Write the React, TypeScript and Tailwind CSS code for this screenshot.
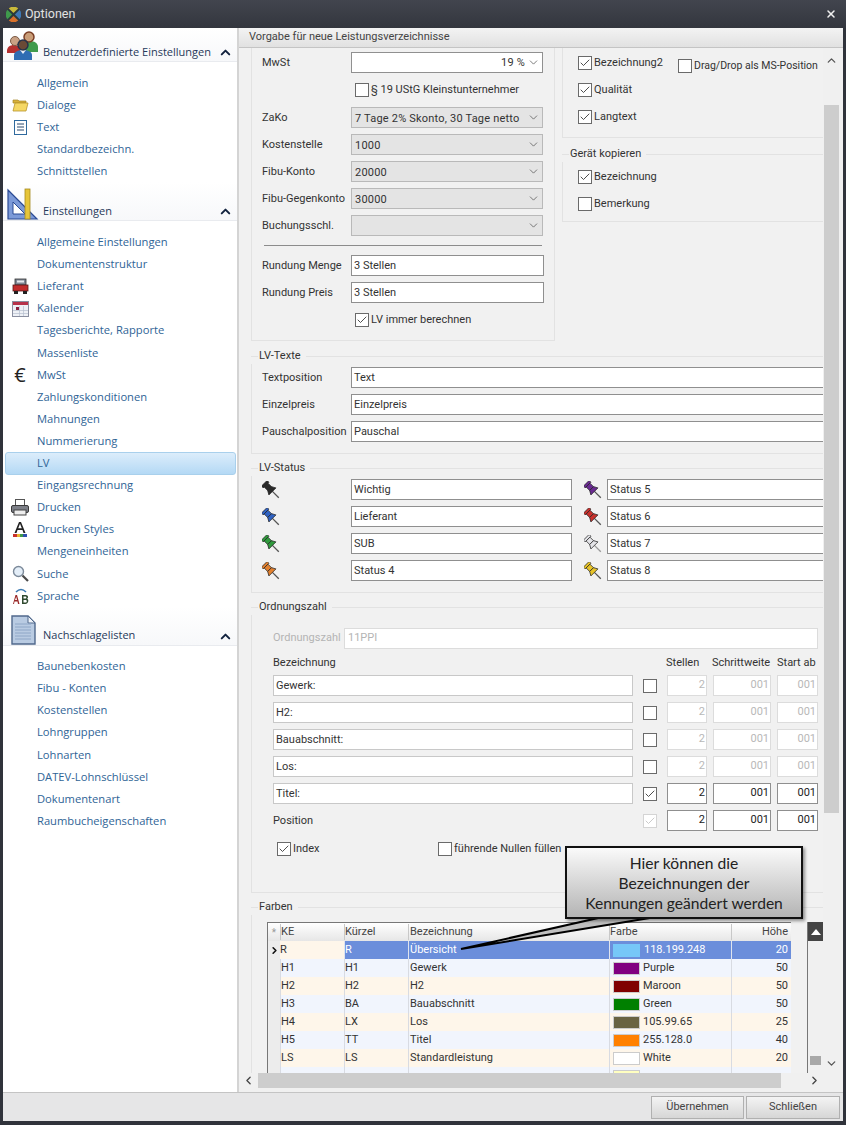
import type { ReactNode } from "react";
import { Check, ChevronDown, ChevronLeft, ChevronRight, ChevronUp, X } from "lucide-react";

const Logo = () => (
  <svg width="15" height="15" viewBox="0 0 16 16">
    <circle cx="8" cy="8" r="8" fill="#2c3a3c" />
    <path d="M3 1.5 A8 8 0 0 1 13 1.5 L8 6.5Z" fill="#c9b93a" />
    <path d="M1.5 3 L6.5 8 L1.5 13 A8 8 0 0 1 1.5 3Z" fill="#3f9a4c" />
    <path d="M3 14.5 L8 9.5 L13 14.5 A8 8 0 0 1 3 14.5Z" fill="#d8702a" />
    <path d="M14.5 3 A8 8 0 0 1 14.5 13 L9.5 8Z" fill="#3f78b4" />
  </svg>
);

const PeopleIcon = () => (
  <svg width="34" height="30" viewBox="0 0 34 30">
    <path d="M1 20c0-4 3-6 7-6s7 2 7 6v2H1z" fill="#b5302f" />
    <circle cx="9" cy="10" r="4.5" fill="#c9a184" stroke="#7a5a45" />
    <path d="M17 16c0-4 3-6 7-6s8 2 8 6v5H17z" fill="#3f9a4c" />
    <circle cx="23" cy="6" r="5" fill="#c99d78" stroke="#7a3e25" strokeWidth="1.5" />
    <path d="M8 29v-5c0-3 4-5 9-5s9 2 9 5v5z" fill="#2f6db3" />
    <path d="M14 19l3 4 3-4z" fill="#e8eef5" />
    <circle cx="17" cy="14" r="5" fill="#6a4a36" stroke="#26334a" strokeWidth="1.5" />
  </svg>
);

const RulerIcon = () => (
  <svg width="32" height="32" viewBox="0 0 32 32">
    <path d="M1 2 L30 31 H1Z" fill="#7c9ad8" stroke="#2a4a94" strokeWidth="1.2" />
    <path d="M6 14 L18 26 H6Z" fill="#fff" stroke="#2a4a94" />
    <rect x="18" y="1" width="5" height="30" fill="#e6c53a" stroke="#a58a1e" strokeWidth=".8" />
  </svg>
);

const DocIcon = () => (
  <svg width="25" height="30" viewBox="0 0 25 30">
    <path d="M1 1h16l7 7v21H1z" fill="#b9cbe2" stroke="#50688c" strokeWidth="1.4" />
    <path d="M17 1v7h7z" fill="#eef3f9" stroke="#50688c" />
    <path d="M4 9h16M4 12h16M4 15h16M4 18h16M4 21h16M4 24h16" stroke="#8ea6c6" />
  </svg>
);

const FolderIcon = () => (
  <svg width="17" height="14" viewBox="0 0 17 14">
    <path d="M1 2h5l1 1h7v2H1z" fill="#d8b13a" stroke="#a8862a" strokeWidth=".7" />
    <path d="M1 13 L3 5h13l-2 8z" fill="#f5d864" stroke="#b8962c" strokeWidth=".8" />
  </svg>
);

const TextIcon = () => (
  <svg width="13" height="15" viewBox="0 0 13 15">
    <rect x=".5" y=".5" width="12" height="14" fill="#fff" stroke="#2f6a9e" />
    <path d="M3 4h7M3 7h7M3 10h7" stroke="#2a4a6e" />
  </svg>
);

const CarIcon = () => (
  <svg width="17" height="17" viewBox="0 0 17 17">
    <rect x="3" y="1" width="11" height="6" fill="#7f8794" stroke="#333" strokeWidth=".8" />
    <rect x="5" y="2.5" width="7" height="2" fill="#e6e8ec" />
    <rect x="1" y="7" width="15" height="6" fill="#c02c2c" stroke="#5a1515" strokeWidth=".8" />
    <rect x="2" y="13" width="4" height="3" fill="#222" />
    <rect x="11" y="13" width="4" height="3" fill="#222" />
  </svg>
);

const CalendarIcon = () => (
  <svg width="17" height="16" viewBox="0 0 17 16">
    <rect x=".5" y=".5" width="16" height="15" fill="#eef1f6" stroke="#8a8fa0" />
    <rect x="1" y="1" width="15" height="3" fill="#b7324a" />
    <rect x="4" y="6" width="3" height="3" fill="#8c2240" />
    <path d="M1 9.5h15M1 12.5h15M7.500 5v10M11.500 5v10" stroke="#b8c0d0" strokeWidth=".7" />
  </svg>
);

const PrinterIcon = () => (
  <svg width="18" height="17" viewBox="0 0 18 17">
    <rect x="4.500" y=".5" width="9" height="7" fill="#fff" stroke="#555" />
    <rect x=".5" y="6.500" width="17" height="7" rx="1.500" fill="#7d8088" stroke="#3a3a3a" />
    <rect x="3" y="11" width="12" height="5" fill="#eee" stroke="#444" />
  </svg>
);

const FontIcon = () => (
  <svg width="16" height="17" viewBox="0 0 16 17">
    <path d="M2.500 12 L7 1h2l4.500 11h-2l-1-3H5.500l-1 3zM6.200 7.200h3.600L8 2.800z" fill="#222" />
    <rect x="1" y="13" width="4" height="3" fill="#c9302c" />
    <rect x="5" y="13" width="3" height="3" fill="#e8b830" />
    <rect x="8" y="13" width="3" height="3" fill="#3f9a4c" />
    <rect x="11" y="13" width="4" height="3" fill="#3050b0" />
  </svg>
);

const SearchIcon = () => (
  <svg width="17" height="17" viewBox="0 0 17 17">
    <circle cx="6.500" cy="6.500" r="5" fill="#e4eef8" stroke="#7c8a9a" strokeWidth="1.400" />
    <path d="M10.500 10.500 L16 16" stroke="#4a4a4a" strokeWidth="2.200" />
  </svg>
);

const LanguageIcon = () => (
  <svg width="17" height="18" viewBox="0 0 17 18">
    <path d="M4 5 Q9 0 14 5" fill="none" stroke="#3a78b0" strokeWidth="1.600" />
    <path d="M1 17 L3.500 8h1.500L7.500 17H6l-.5-2.500h-3L2 17zM3 13h2L4.200 9.800z" fill="#9a2a2a" />
    <path d="M10 8h3.500c2 0 2.500 1 2.500 2s-.5 1.500-1 1.800c.8.300 1.300 1 1.300 2 0 2-1.300 3.200-3 3.200H10zM11.500 9.500v2h1.700c.8 0 1.200-.4 1.200-1s-.4-1-1.200-1zM11.500 13v2.500h1.800c1 0 1.500-.5 1.500-1.300S14.300 13 13.300 13z" fill="#2f4a2f" />
  </svg>
);

const Pin = ({ color, needle = "#555" }: { color: string; needle?: string }) => (
  <svg width="18" height="18" viewBox="0 0 18 18">
    <g transform="rotate(-45 9 9)" fill={color} stroke="#222" strokeWidth=".7">
      <line x1="9" y1="11" x2="9" y2="20" stroke={needle} strokeWidth="1.300" />
      <rect x="5" y="-.5" width="8" height="2.500" />
      <rect x="6.300" y="2" width="5.400" height="5" />
      <path d="M4 11h10l-2.300-4H6.300z" />
    </g>
  </svg>
);

const sections: {
  title: string;
  icon: ReactNode;
  cls: string;
  items: { label: string; icon?: ReactNode; active?: boolean }[];
}[] = [
  {
    title: "Benutzerdefinierte Einstellungen",
    icon: <PeopleIcon />,
    cls: "h-[34px]",
    items: [
      { label: "Allgemein" },
      { label: "Dialoge", icon: <FolderIcon /> },
      { label: "Text", icon: <TextIcon /> },
      { label: "Standardbezeichn." },
      { label: "Schnittstellen" },
    ],
  },
  {
    title: "Einstellungen",
    icon: <RulerIcon />,
    cls: "h-[39px]",
    items: [
      { label: "Allgemeine Einstellungen" },
      { label: "Dokumentenstruktur" },
      { label: "Lieferant", icon: <CarIcon /> },
      { label: "Kalender", icon: <CalendarIcon /> },
      { label: "Tagesberichte, Rapporte" },
      { label: "Massenliste" },
      { label: "MwSt", icon: <span className="text-[20px] leading-none text-[#222]">€</span> },
      { label: "Zahlungskonditionen" },
      { label: "Mahnungen" },
      { label: "Nummerierung" },
      { label: "LV", active: true },
      { label: "Eingangsrechnung" },
      { label: "Drucken", icon: <PrinterIcon /> },
      { label: "Drucken Styles", icon: <FontIcon /> },
      { label: "Mengeneinheiten" },
      { label: "Suche", icon: <SearchIcon /> },
      { label: "Sprache", icon: <LanguageIcon /> },
    ],
  },
  {
    title: "Nachschlagelisten",
    icon: <DocIcon />,
    cls: "h-[38.5px]",
    items: [
      { label: "Baunebenkosten" },
      { label: "Fibu - Konten" },
      { label: "Kostenstellen" },
      { label: "Lohngruppen" },
      { label: "Lohnarten" },
      { label: "DATEV-Lohnschlüssel" },
      { label: "Dokumentenart" },
      { label: "Raumbucheigenschaften" },
    ],
  },
];

function Sidebar() {
  return (
    <div className="w-[234px] shrink-0 bg-white [font-family:'Open_Sans',sans-serif]">
      {sections.map((s) => (
        <div key={s.title}>
          <div className={`${s.cls} flex items-end border-b border-[#e9ebef] bg-gradient-to-b from-white to-[#f7f8fa]`}>
            <div className="flex w-[40px] shrink-0 justify-center">{s.icon}</div>
            <span className="flex-1 whitespace-nowrap pb-[1px] text-[11px] text-[#27395a]">{s.title}</span>
            <ChevronUp size={15} strokeWidth={3.2} className="mr-[4px] mb-[1px] shrink-0 text-[#13233f]" />
          </div>
          <div className="pt-[10px]">
            {s.items.map((it) => (
              <div
                key={it.label}
                className={`flex h-[22.1px] items-center text-[11.2px] text-[#2f6496] ${
                  it.active ? "ml-[2px] mr-[1px] rounded-[3px] border border-[#a9d0ec] bg-gradient-to-b from-[#dcedfb] to-[#b4d9f5]" : ""
                }`}
              >
                <div className={`flex shrink-0 justify-center ${it.active ? "w-[31px]" : "w-[34px]"}`}>{it.icon}</div>
                <span>{it.label}</span>
              </div>
            ))}
          </div>
        </div>
      ))}
    </div>
  );
}

function Box({ checked, disabled }: { checked?: boolean; disabled?: boolean }) {
  return (
    <span
      className={`flex h-[14px] w-[14px] shrink-0 items-center justify-center border bg-white ${
        disabled ? "border-[#d4d4d4] text-[#c4c4c4]" : "border-[#6a6a6a] text-[#3a3a3a]"
      }`}
    >
      {checked && <Check size={12} strokeWidth={1.8} />}
    </span>
  );
}

function CheckRow({ label, checked, className = "" }: { label: string; checked?: boolean; className?: string }) {
  return (
    <div className={`flex h-[21px] items-center gap-[2px] whitespace-nowrap ${className}`}>
      <Box checked={checked} />
      <span className="pt-[1px]">{label}</span>
    </div>
  );
}

function Select({ value, white }: { value: string; white?: boolean }) {
  return (
    <div
      className={`flex h-[21px] w-[192px] items-center border pl-[3px] pr-[2px] tracking-[0.2px] ${
        white ? "justify-end border-[#909090] bg-white" : "border-[#b9b9b9] bg-[#e4e4e4]"
      }`}
    >
      <span className={white ? "mr-[2px] pt-[2px]" : "flex-1 pt-[3px]"}>{value}</span>
      <ChevronDown size={13} strokeWidth={1.4} className="text-[#555]" />
    </div>
  );
}

function Input({ value, className = "" }: { value: string; className?: string }) {
  return <div className={`flex h-[21px] items-center border border-[#8f8f8f] bg-white pl-[2px] pt-[2px] ${className}`}>{value}</div>;
}

function Row({ label, children }: { label: string; children: ReactNode }) {
  return (
    <div className="flex items-center">
      <span className="w-[89px] shrink-0 whitespace-nowrap pt-[1px]">{label}</span>
      {children}
    </div>
  );
}

function GroupTitle({ title }: { title: string }) {
  return (
    <div className="flex h-[16px] items-center">
      <span className="h-px w-[7px] bg-[#e2e2e2]" />
      <span className="px-[1px]">{title}</span>
      <span className="ml-[4px] h-px flex-1 bg-[#e2e2e2]" />
    </div>
  );
}

const pinRows = [
  { c1: "#2a2a2a", t1: "Wichtig", c2: "#6a2a92", t2: "Status 5" },
  { c1: "#2f62c4", t1: "Lieferant", c2: "#c8302c", t2: "Status 6" },
  { c1: "#2f9a3c", t1: "SUB", c2: "#e4e4e8", t2: "Status 7" },
  { c1: "#e2802e", t1: "Status 4", c2: "#e8c428", t2: "Status 8" },
];

const ordRows = [
  { label: "Gewerk:", on: false },
  { label: "H2:", on: false },
  { label: "Bauabschnitt:", on: false },
  { label: "Los:", on: false },
  { label: "Titel:", on: true },
];

function Num({ v, on, className }: { v: string; on?: boolean; className: string }) {
  return (
    <div
      className={`flex h-[21px] items-center justify-end border bg-white pr-[1px] ${className} ${
        on ? "border-[#8f8f8f] text-[#222]" : "border-[#dcdcdc] text-[#b8b8b8]"
      }`}
    >
      {v}
    </div>
  );
}

const colorRows = [
  { ke: "H1", kz: "H1", name: "Gewerk", swatch: "bg-[#800080]", farbe: "Purple", h: "50", bg: "bg-[#f1f5fd]" },
  { ke: "H2", kz: "H2", name: "H2", swatch: "bg-[#800000]", farbe: "Maroon", h: "50", bg: "bg-[#fef6ea]" },
  { ke: "H3", kz: "BA", name: "Bauabschnitt", swatch: "bg-[#008000]", farbe: "Green", h: "50", bg: "bg-[#f1f5fd]" },
  { ke: "H4", kz: "LX", name: "Los", swatch: "bg-[#696341]", farbe: "105.99.65", h: "25", bg: "bg-[#fef6ea]" },
  { ke: "H5", kz: "TT", name: "Titel", swatch: "bg-[#ff8000]", farbe: "255.128.0", h: "40", bg: "bg-[#f1f5fd]" },
  { ke: "LS", kz: "LS", name: "Standardleistung", swatch: "bg-white", farbe: "White", h: "20", bg: "bg-[#fef6ea]" },
  { ke: "", kz: "", name: "", swatch: "bg-[#ffffc0]", farbe: "", h: "", bg: "bg-[#f1f5fd]" },
];

const gridCols = "grid grid-cols-[12px_64px_64px_201px_122px_60px]";

function ColorGrid() {
  return (
    <div className="flex">
      <div className="w-[524px] shrink-0 border-l border-t border-[#777]">
        <div className={`${gridCols} h-[18px] items-center bg-gradient-to-b from-white to-[#e6e6e6] text-[#444]`}>
          <span className="text-center text-[10px] text-[#999]">*</span>
          <span className="border-l border-[#c8c8c8]">KE</span>
          <span className="border-l border-[#c8c8c8]">Kürzel</span>
          <span className="border-l border-[#c8c8c8] pl-[1px]">Bezeichnung</span>
          <span className="border-l border-[#c8c8c8]">Farbe</span>
          <span className="border-l border-[#c8c8c8] pr-[3px] text-right">Höhe</span>
        </div>
        <div className={`${gridCols} h-[18px] items-stretch bg-[#6b8edb] text-white`}>
          <span className="flex items-center justify-center bg-[#ececec]">
            <ChevronRight size={11} strokeWidth={3.5} className="text-[#111]" />
          </span>
          <span className="flex items-center bg-[#fef6ea] text-[#333]">R</span>
          <span className="flex items-center border-l border-[#dfe4ee]">R</span>
          <span className="flex items-center border-l border-[#dfe4ee] pl-[1px]">Übersicht</span>
          <span className="flex items-center border-l border-[#dfe4ee] pl-[3px]">
            <span className="h-[13px] w-[27px] bg-[#76c7f8]" />
            <span className="pl-[4px]">118.199.248</span>
          </span>
          <span className="flex items-center justify-end border-l border-[#dfe4ee] pr-[3px]">20</span>
        </div>
        {colorRows.map((r, i) => (
          <div key={i} className={`${gridCols} h-[18px] items-stretch ${r.bg} text-[#333]`}>
            <span className="bg-[#ececec]" />
            <span className="flex items-center border-l border-[#d8dbe2]">{r.ke}</span>
            <span className="flex items-center border-l border-[#d8dbe2]">{r.kz}</span>
            <span className="flex items-center border-l border-[#d8dbe2] pl-[1px]">{r.name}</span>
            <span className="flex items-center border-l border-[#d8dbe2] pl-[3px]">
              <span className={`h-[13px] w-[27px] border border-[#ccc] ${r.swatch}`} />
              <span className="pl-[3px]">{r.farbe}</span>
            </span>
            <span className="flex items-center justify-end border-l border-[#d8dbe2] pr-[3px]">{r.h}</span>
          </div>
        ))}
      </div>
      <div className="ml-[16px] flex h-[153px] w-[16px] shrink-0 flex-col items-center border-l border-[#777] bg-[#f0f0f0]">
        <div className="flex h-[19px] w-full items-center justify-center bg-[#444]">
          <span className="h-0 w-0 border-x-[5px] border-b-[6px] border-x-transparent border-b-white" />
        </div>
        <div className="mt-[115px] h-[9px] w-[11px] bg-[#a8a8a8]" />
      </div>
    </div>
  );
}

function Content() {
  return (
    <div className="min-w-0 flex-1 overflow-hidden pl-[12px]">
      <div className="flex">
        <div className="h-[293px] w-[304px] shrink-0 border-x border-b border-[#e2e2e2] pl-[10px] pt-[4px]">
          <div className="flex flex-col gap-[6px]">
            <Row label="MwSt"><Select value="19 %" white /></Row>
            <div className="flex h-[22px] items-center gap-[2px] pl-[93px]">
              <Box />
              <span>§ 19 UStG Kleinstunternehmer</span>
            </div>
            <Row label="ZaKo"><Select value="7 Tage 2% Skonto, 30 Tage netto" /></Row>
            <Row label="Kostenstelle"><Select value="1000" /></Row>
            <Row label="Fibu-Konto"><Select value="20000" /></Row>
            <Row label="Fibu-Gegenkonto"><Select value="30000" /></Row>
            <Row label="Buchungsschl."><Select value="" /></Row>
            <div className="my-[3px] ml-[2px] h-px w-[278px] bg-[#8c8c8c]" />
            <Row label="Rundung Menge"><Input value="3 Stellen" className="w-[193px]" /></Row>
            <Row label="Rundung Preis"><Input value="3 Stellen" className="w-[193px]" /></Row>
            <div className="flex h-[22px] items-center pl-[93px]">
              <CheckRow label="LV immer berechnen" checked />
            </div>
          </div>
        </div>
        <div className="ml-[7px] min-w-0 flex-1">
          <div className="h-[90px] border-b border-l border-[#e2e2e2] pl-[15px] pt-[4px]">
            <div className="flex flex-col gap-[6px]">
              <div className="flex h-[21px]">
                <CheckRow label="Bezeichnung2" checked className="w-[100px]" />
                <CheckRow label="Drag/Drop als MS-Position" className="mt-[3px] text-[10.5px]" />
              </div>
              <CheckRow label="Qualität" checked />
              <CheckRow label="Langtext" checked />
            </div>
          </div>
          <div className="mt-[8px]">
            <GroupTitle title="Gerät kopieren" />
            <div className="h-[60px] border-b border-l border-[#e2e2e2] pl-[15px] pt-[4px]">
              <div className="flex flex-col gap-[6px]">
                <CheckRow label="Bezeichnung" checked />
                <CheckRow label="Bemerkung" />
              </div>
            </div>
          </div>
        </div>
      </div>

      <div className="mt-[7px]">
        <GroupTitle title="LV-Texte" />
        <div className="flex flex-col gap-[6px] border-b border-l border-[#e2e2e2] pb-[11px] pl-[10px] pt-[3px]">
          <Row label="Textposition"><Input value="Text" className="flex-1 border-r-0" /></Row>
          <Row label="Einzelpreis"><Input value="Einzelpreis" className="flex-1 border-r-0" /></Row>
          <Row label="Pauschalposition"><Input value="Pauschal" className="flex-1 border-r-0" /></Row>
        </div>
      </div>

      <div className="mt-[6px]">
        <GroupTitle title="LV-Status" />
        <div className="flex flex-col gap-[6px] border-b border-l border-[#e2e2e2] pb-[11px] pl-[10px] pt-[3px]">
          {pinRows.map((r) => (
            <div key={r.t1} className="flex items-center">
              <span className="w-[89px] shrink-0"><Pin color={r.c1} /></span>
              <Input value={r.t1} className="w-[221px] shrink-0" />
              <span className="ml-[12px] w-[23px] shrink-0"><Pin color={r.c2} needle={r.c2 === "#e4e4e8" ? "#999" : "#555"} /></span>
              <Input value={r.t2} className="flex-1 border-r-0" />
            </div>
          ))}
        </div>
      </div>

      <div className="mt-[6px]">
        <GroupTitle title="Ordnungszahl" />
        <div className="h-[278px] border-b border-l border-[#e2e2e2] pl-[21px] pt-[13px]">
          <div className="flex items-center">
            <span className="w-[71px] shrink-0 text-[#b4b4b4]">Ordnungszahl</span>
            <div className="flex h-[21px] w-[474px] items-center border border-[#dcdcdc] bg-white pl-[3px] text-[#b4b4b4]">11PPI</div>
          </div>
          <div className="flex h-[26px] items-center pt-[2px]">
            <span className="w-[393px] shrink-0">Bezeichnung</span>
            <span className="w-[46px] shrink-0">Stellen</span>
            <span className="w-[65px] shrink-0">Schrittweite</span>
            <span>Start ab</span>
          </div>
          <div className="flex flex-col gap-[6px]">
            {ordRows.map((r) => (
              <div key={r.label} className="flex items-center">
                <div className="flex h-[21px] w-[360px] shrink-0 items-center border border-[#c8c8c8] bg-white pl-[2px] pt-[2px]">{r.label}</div>
                <span className="ml-[10px]"><Box checked={r.on} /></span>
                <Num v="2" on={r.on} className="ml-[10px] w-[40px]" />
                <Num v="001" on={r.on} className="ml-[6px] w-[58px]" />
                <Num v="001" on={r.on} className="ml-[6px] w-[41px]" />
              </div>
            ))}
            <div className="flex items-center">
              <span className="w-[370px] shrink-0 pt-[2px]">Position</span>
              <Box checked disabled />
              <Num v="2" on className="ml-[10px] w-[40px]" />
              <Num v="001" on className="ml-[6px] w-[58px]" />
              <Num v="001" on className="ml-[6px] w-[41px]" />
            </div>
          </div>
          <div className="mt-[7px] flex items-center pl-[4px]">
            <CheckRow label="Index" checked className="w-[161px]" />
            <CheckRow label="führende Nullen füllen" />
          </div>
        </div>
      </div>

      <div className="mt-[6px]">
        <GroupTitle title="Farben" />
        <div className="border-l border-[#e2e2e2] pl-[15px] pt-[7px]">
          <ColorGrid />
        </div>
      </div>
    </div>
  );
}

export default function App() {
  return (
    <div className="relative flex h-[1125px] w-[846px] flex-col overflow-hidden bg-[#30333b] text-[11px] text-[#333] [font-family:Roboto,sans-serif]">
      <div className="flex h-[28px] shrink-0 items-center bg-gradient-to-b from-[#42454e] to-[#33363e] pl-[6px] pr-[9px]">
        <Logo />
        <span className="ml-[4px] flex-1 text-[12.5px] text-[#e2e2e2]">Optionen</span>
        <X size={12} strokeWidth={3} className="text-[#f0f0f0]" />
      </div>

      <div className="flex min-h-0 flex-1 px-[3px]">
        <Sidebar />
        <div className="flex min-w-0 flex-1 flex-col border-l-2 border-[#d4d4d4] bg-[#f1f1f1]">
          <div className="flex h-[20px] shrink-0 items-center border-b border-[#c4c4c4] bg-gradient-to-b from-[#f3f3f3] to-[#e1e1e1] pl-[10px] text-[#444]">
            Vorgabe für neue Leistungsverzeichnisse
          </div>
          <div className="flex min-h-0 flex-1">
            <Content />
            <div className="flex w-[20px] shrink-0 flex-col items-center bg-[#f0f0f0] pr-[4px]">
              <ChevronUp size={13} strokeWidth={2.4} className="mt-[6px] text-[#555]" />
              <div className="mt-[38px] h-[708px] w-[15px] shrink-0 bg-[#cdcdcd]" />
              <ChevronDown size={13} strokeWidth={2.4} className="mt-auto mb-[3px] text-[#555]" />
            </div>
          </div>
          <div className="flex h-[19px] shrink-0 items-start bg-[#f0f0f0]">
            <ChevronLeft size={13} strokeWidth={2.4} className="ml-[3px] mt-[1px] text-[#444]" />
            <div className="ml-[3px] h-[15px] w-[523px] bg-[#cdcdcd]" />
            <ChevronRight size={13} strokeWidth={2.4} className="ml-[27px] mt-[1px] text-[#444]" />
          </div>
        </div>
      </div>

      <div className="mx-[3px] mb-[4px] flex h-[29px] shrink-0 items-center justify-end gap-[2px] border-t border-[#c4c4c4] bg-[#e6e6e7] pr-[3px]">
        <div className="flex h-[23px] w-[93px] items-center justify-center border border-[#b0b0b0] bg-gradient-to-b from-[#f4f4f4] to-[#d6d6d6] text-[#444]">Übernehmen</div>
        <div className="flex h-[23px] w-[94px] items-center justify-center border border-[#b0b0b0] bg-gradient-to-b from-[#f4f4f4] to-[#d6d6d6] text-[#444]">Schließen</div>
      </div>

      <svg className="absolute left-[455px] top-[912px]" width="215" height="42" viewBox="0 0 215 42">
        <path d="M152 4 L6 37 L207 4" fill="#c0c0c0" stroke="#000" strokeWidth="2" />
      </svg>
      <div className="absolute left-[565px] top-[846px] flex h-[73px] w-[238px] flex-col items-center justify-center border-2 border-[#111] bg-gradient-to-b from-[#fafafa] to-[#b4b4b4] text-[15.6px] leading-[20px] text-[#222] shadow-[2px_2px_3px_rgba(0,0,0,0.4)] [font-family:Lato,sans-serif]">
        <span>Hier können die</span>
        <span>Bezeichnungen der</span>
        <span>Kennungen geändert werden</span>
      </div>
    </div>
  );
}
